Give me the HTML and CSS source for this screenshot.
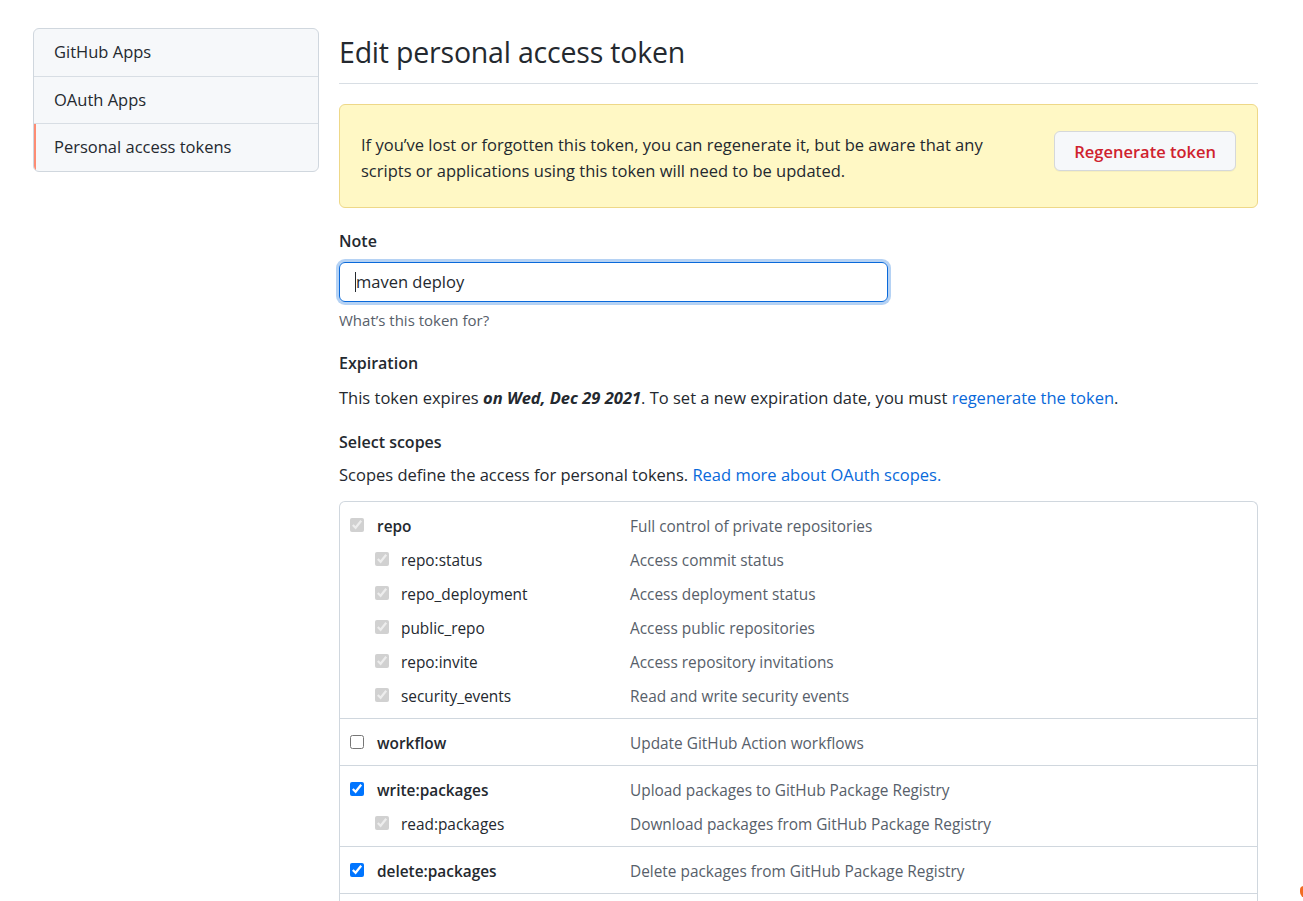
FILE: index.html
```html
<!DOCTYPE html>
<html lang="en">
<head>
<meta charset="utf-8">
<title>Edit personal access token</title>
<link rel="stylesheet" href="styles.css">
</head>
<body>
<div class="page">
  <nav class="menu">
    <a class="menu-item">GitHub Apps</a>
    <a class="menu-item">OAuth Apps</a>
    <a class="menu-item selected">Personal access tokens</a>
  </nav>
  <main class="main">
    <div class="subhead"><h2 class="subhead-heading">Edit personal access token</h2></div>
    <div class="flash">
      <p class="flash-text">If you’ve lost or forgotten this token, you can regenerate it, but be aware that any scripts or applications using this token will need to be updated.</p>
      <button class="btn-danger">Regenerate token</button>
    </div>
    <div class="form-group">
      <label class="label">Note</label>
      <div class="field"><span class="caret"></span><span class="field-value">maven deploy</span></div>
      <p class="note">What’s this token for?</p>
    </div>
    <div class="section">
      <h3 class="label">Expiration</h3>
      <p class="text">This token expires <strong class="em">on Wed, Dec 29 2021</strong>. To set a new expiration date, you must <a class="link">regenerate the token</a>.</p>
    </div>
    <div class="section">
      <h3 class="label">Select scopes</h3>
      <p class="text">Scopes define the access for personal tokens. <a class="link">Read more about OAuth scopes.</a></p>
    </div>
    <div class="scopes">
      <div class="group">
        <div class="row"><span class="name"><input type="checkbox" checked disabled><b>repo</b></span><span class="desc">Full control of private repositories</span></div>
        <div class="row sub"><span class="name"><input type="checkbox" checked disabled>repo:status</span><span class="desc">Access commit status</span></div>
        <div class="row sub"><span class="name"><input type="checkbox" checked disabled>repo_deployment</span><span class="desc">Access deployment status</span></div>
        <div class="row sub"><span class="name"><input type="checkbox" checked disabled>public_repo</span><span class="desc">Access public repositories</span></div>
        <div class="row sub"><span class="name"><input type="checkbox" checked disabled>repo:invite</span><span class="desc">Access repository invitations</span></div>
        <div class="row sub"><span class="name"><input type="checkbox" checked disabled>security_events</span><span class="desc">Read and write security events</span></div>
      </div>
      <div class="group">
        <div class="row"><span class="name"><input type="checkbox"><b>workflow</b></span><span class="desc">Update GitHub Action workflows</span></div>
      </div>
      <div class="group">
        <div class="row"><span class="name"><input type="checkbox" checked><b>write:packages</b></span><span class="desc">Upload packages to GitHub Package Registry</span></div>
        <div class="row sub"><span class="name"><input type="checkbox" checked disabled>read:packages</span><span class="desc">Download packages from GitHub Package Registry</span></div>
      </div>
      <div class="group">
        <div class="row"><span class="name"><input type="checkbox" checked><b>delete:packages</b></span><span class="desc">Delete packages from GitHub Package Registry</span></div>
      </div>
      <div class="group-more"></div>
    </div>
  </main>
</div>
<div class="widget"></div>
</body>
</html>
```

FILE: styles.css
```css
html, body { margin: 0; padding: 0; background: #fff; overflow: hidden; height: 901px; }
body {
  font-family: "Open Sans", "Noto Sans", "Liberation Sans", sans-serif;
  font-size: 16px;
  color: #24292f;
  line-height: 1.5;
}
.page {
  display: flex;
  align-items: flex-start;
  gap: 20px;
  padding: 28px 0 0 33px;
}
.menu {
  width: 284px;
  flex: none;
  display: flex;
  flex-direction: column;
  background: #f6f8fa;
  border: 1px solid #d0d7de;
  border-radius: 6px;
  overflow: hidden;
}
.menu-item {
  display: block;
  padding: 11px 20px;
  height: 24.5px;
  line-height: 24.5px;
  font-size: 16.5px;
  border-top: 1px solid #d8dee4;
  color: #24292f;
}
.menu-item:first-child { border-top: 0; }
.menu-item.selected { box-shadow: inset 2px 0 0 #fd8c73; }
.main { width: 919px; flex: none; }
.subhead {
  border-bottom: 1px solid #d8dee4;
  padding: 4px 0 11px;
  margin-bottom: 20px;
}
.subhead-heading {
  margin: 0;
  font-size: 28.5px;
  font-weight: 400;
  line-height: 40px;
  letter-spacing: -0.2px;
}
.flash {
  display: flex;
  align-items: flex-start;
  justify-content: space-between;
  background: #fff8c5;
  border: 1px solid #eed888;
  border-radius: 6px;
  padding: 27px 21px 23px 21px;
}
.flash-text {
  margin: 0;
  width: 650px;
  line-height: 26px;
  font-size: 16.5px;
}
.btn-danger {
  margin-top: -1px;
  font-family: inherit;
  font-size: 16.5px;
  font-weight: 600;
  color: #cf222e;
  background: #f6f8fa;
  border: 1px solid #d5d8da;
  border-radius: 6px;
  padding: 0 19px;
  height: 40px;
  box-shadow: 0 1px 0 rgba(27,31,36,0.04);
}
.form-group { margin-top: 21px; }
.label {
  display: block;
  margin: 0;
  font-size: 16px;
  font-weight: 600;
  line-height: 24px;
}
.field {
  box-sizing: border-box;
  margin-top: 9px;
  width: 549px;
  height: 40px;
  border: 1px solid #0969da;
  border-radius: 6px;
  box-shadow: 0 0 0 3px rgba(9,105,218,0.3);
  display: flex;
  align-items: center;
  padding-left: 15px;
  font-size: 16.5px;
}
.caret { width: 1px; height: 20px; background: #24292f; }
.note {
  margin: 8px 0 0;
  font-size: 15px;
  color: #57606a;
  line-height: 20px;
}
.section { margin-top: 21px; }
.section .text { margin: 11px 0 0; }
.section + .section { margin-top: 20px; }
.section + .section .text { margin-top: 9px; }
.text {
  font-size: 16.5px;
  line-height: 24px;
}
.em { font-style: italic; font-weight: 700; }
.link { color: #0969da; }
.scopes {
  margin-top: 14px;
  border: 1px solid #d0d7de;
  border-radius: 6px 6px 0 0;
  border-bottom: 0;
}
.group {
  border-bottom: 1px solid #d0d7de;
  padding: 6px 0;
}
.group-more { height: 12px; }
.row {
  box-sizing: border-box;
  display: flex;
  height: 34px;
  padding-top: 3px;
  align-items: center;
  font-size: 15.4px;
}
.name {
  box-sizing: border-box;
  width: 290px;
  padding-left: 10px;
  display: flex;
  align-items: center;
}
.row.sub .name { padding-left: 35px; }
.name input {
  width: 14px;
  height: 14px;
  margin: -3px 13px 0 0;
  accent-color: #0075ff;
}
.row.sub .name input { margin-right: 12px; }
.name b { font-weight: 600; }
.desc { color: #57606a; }
.widget {
  position: absolute;
  left: 1300px;
  top: 886px;
  width: 8px;
  height: 12px;
  background: #f26b21;
  border-radius: 4px 0 0 6px;
}
```
